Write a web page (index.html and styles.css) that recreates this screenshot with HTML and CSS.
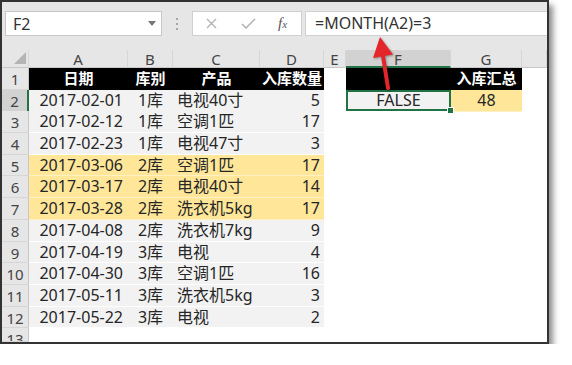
FILE: index.html
```html
<!DOCTYPE html>
<html lang="zh">

<head>
    <meta charset="UTF-8">
    <meta name="viewport" content="width=device-width, initial-scale=1.0">
    <title>入库汇总</title>
    <link rel="stylesheet" href="styles.css">
</head>

<body>
    <div class="frame">
        <div class="toolbar">
            <div class="namebox">
                <span>F2</span>
                <svg class="caret" width="8" height="5" viewBox="0 0 8 5"><polygon points="0,0 8,0 4,5" fill="#777"/></svg>
            </div>
            <div class="dots"><i></i><i></i><i></i></div>
            <div class="fxbox">
                <svg width="11" height="11" viewBox="0 0 11 11"><path d="M1 1 L10 10 M10 1 L1 10" stroke="#b4b4b4" stroke-width="1.4"/></svg>
                <svg width="15" height="11" viewBox="0 0 15 11"><path d="M1 6 L5 10 L14 1" stroke="#b4b4b4" stroke-width="1.6" fill="none"/></svg>
                <span class="fx">f<small>x</small></span>
            </div>
            <div class="formula">=MONTH(A2)=3</div>
        </div>

        <div class="sheet">
            <div class="row colhead">
                <div class="corner"><svg width="12" height="12" viewBox="0 0 12 12"><polygon points="0,12 12,12 12,0" fill="#b4b4b4"/></svg></div>
                <div>A</div><div>B</div><div>C</div><div>D</div><div>E</div><div class="sel">F</div><div>G</div><div></div>
            </div>
            <div class="row">
                <div class="rn">1</div>
                <div class="hd">日期</div><div class="hd">库别</div><div class="hd">产品</div><div class="hd">入库数量</div>
                <div></div><div class="hd"></div><div class="hd">入库汇总</div><div></div>
            </div>
            <div class="row">
                <div class="rn cur">2</div>
                <div class="g date">2017-02-01</div><div class="g ctr">1库</div><div class="g left">电视40寸</div><div class="g num">5</div>
                <div></div><div class="g ctr active">FALSE</div><div class="y ctr">48</div><div></div>
            </div>
            <div class="row">
                <div class="rn">3</div>
                <div class="g date">2017-02-12</div><div class="g ctr">1库</div><div class="g left">空调1匹</div><div class="g num">17</div>
            </div>
            <div class="row">
                <div class="rn">4</div>
                <div class="g date">2017-02-23</div><div class="g ctr">1库</div><div class="g left">电视47寸</div><div class="g num">3</div>
            </div>
            <div class="row">
                <div class="rn">5</div>
                <div class="y date">2017-03-06</div><div class="y ctr">2库</div><div class="y left">空调1匹</div><div class="y num">17</div>
            </div>
            <div class="row">
                <div class="rn">6</div>
                <div class="y date">2017-03-17</div><div class="y ctr">2库</div><div class="y left">电视40寸</div><div class="y num">14</div>
            </div>
            <div class="row">
                <div class="rn">7</div>
                <div class="y date">2017-03-28</div><div class="y ctr">2库</div><div class="y left">洗衣机5kg</div><div class="y num">17</div>
            </div>
            <div class="row">
                <div class="rn">8</div>
                <div class="g date">2017-04-08</div><div class="g ctr">2库</div><div class="g left">洗衣机7kg</div><div class="g num">9</div>
            </div>
            <div class="row">
                <div class="rn">9</div>
                <div class="g date">2017-04-19</div><div class="g ctr">3库</div><div class="g left">电视</div><div class="g num">4</div>
            </div>
            <div class="row">
                <div class="rn">10</div>
                <div class="g date">2017-04-30</div><div class="g ctr">3库</div><div class="g left">空调1匹</div><div class="g num">16</div>
            </div>
            <div class="row">
                <div class="rn">11</div>
                <div class="g date">2017-05-11</div><div class="g ctr">3库</div><div class="g left">洗衣机5kg</div><div class="g num">3</div>
            </div>
            <div class="row">
                <div class="rn">12</div>
                <div class="g date">2017-05-22</div><div class="g ctr">3库</div><div class="g left">电视</div><div class="g num">2</div>
            </div>
            <div class="row last">
                <div class="rn">13</div>
            </div>
        </div>

        <!-- red arrow pointing at the formula -->
        <svg class="arrow" width="30" height="60" viewBox="0 0 30 60">
            <line x1="14.5" y1="18" x2="20" y2="53" stroke="#e4262a" stroke-width="4" stroke-linecap="round"/>
            <polygon points="12,2 5,23 25,19.5" fill="#e4262a"/>
        </svg>
    </div>
</body>

</html>
```

FILE: styles.css
```css
body {
    margin: 0;
    padding: 0;
    background-color: #fff;
    font-family: "Noto Sans", "Noto Sans CJK SC", sans-serif;
    color: #262626;
}

.frame {
    position: relative;
    width: 549px;
    height: 344px;
    box-sizing: border-box;
    border: 2px solid #333;
    background-color: #fff;
    box-shadow: 4px 5px 6px rgba(0, 0, 0, 0.45);
    overflow: hidden;
}

/* formula bar */
.toolbar {
    height: 48px;
    background-color: #e6e6e6;
    display: flex;
    align-items: flex-start;
    padding-top: 9px;
    box-sizing: border-box;
}

.namebox {
    margin-left: 3px;
    width: 157px;
    height: 25px;
    box-sizing: border-box;
    background-color: #fff;
    border: 1px solid #c6c6c6;
    display: flex;
    align-items: center;
    justify-content: space-between;
    padding: 0 5px 0 7px;
    font-size: 16px;
    color: #333;
}

.dots {
    width: 30px;
    height: 25px;
    display: flex;
    flex-direction: column;
    align-items: center;
    justify-content: center;
    gap: 3px;
}

.dots i {
    width: 2px;
    height: 2px;
    background-color: #a8a8a8;
}

.fxbox {
    width: 110px;
    height: 25px;
    box-sizing: border-box;
    background-color: #fff;
    border: 1px solid #d0d0d0;
    display: flex;
    align-items: center;
    padding-left: 13px;
    gap: 0;
}

.fxbox svg:nth-child(2) {
    margin-left: 24px;
}

.fx {
    margin-left: 22px;
    font-family: "Liberation Serif", serif;
    font-style: italic;
    font-size: 15px;
    color: #555;
}

.fx small {
    font-size: 11px;
}

.formula {
    margin-left: 3px;
    flex: 1;
    height: 25px;
    box-sizing: border-box;
    background-color: #fff;
    border: 1px solid #d0d0d0;
    border-right: none;
    padding-left: 9px;
    font-size: 16px;
    line-height: 23px;
    color: #333;
}

/* sheet grid */
.row {
    display: grid;
    grid-template-columns: 27px 99px 45px 87px 64px 22px 105px 71px 1fr;
    height: 21.7px;
    font-size: 16px;
    line-height: 21px;
}

.row > div {
    box-sizing: border-box;
    white-space: nowrap;
    overflow: hidden;
}

.row.last {
    height: 14px;
}

.colhead {
    height: 18px;
    background-color: #e6e6e6;
    font-size: 15px;
    line-height: 18px;
    color: #444;
    text-align: center;
}

.colhead > div {
    border-right: 1px solid #d6d6d6;
    border-bottom: 1px solid #c8c8c8;
}

.colhead .corner {
    display: flex;
    align-items: flex-end;
    justify-content: flex-end;
    padding: 0 2px 3px 0;
}

.colhead .sel {
    background-color: #d2d2d2;
    border-bottom: 2px solid #217346;
}

.rn {
    background-color: #e6e6e6;
    border-right: 1px solid #c8c8c8;
    border-bottom: 1px solid #d6d6d6;
    text-align: center;
    font-size: 15px;
    color: #444;
    line-height: 22px;
}

.rn.cur {
    background-color: #d2d2d2;
    border-right: 2px solid #217346;
}

.hd {
    background-color: #000;
    color: #fff;
    font-weight: bold;
    font-size: 15px;
    text-align: center;
}

.g {
    background-color: #f2f2f2;
    border-bottom: 1px solid #fff;
}

.y {
    background-color: #ffe699;
    border-bottom: 1px solid #fff1c4;
}

.date {
    text-align: right;
    padding-right: 5px;
}

.ctr {
    text-align: center;
}

.left {
    padding-left: 4px;
}

.num {
    text-align: right;
    padding-right: 4px;
}

.active {
    position: relative;
    overflow: visible !important;
    box-shadow: inset 0 0 0 2px #217346;
}

.active::after {
    content: "";
    position: absolute;
    right: -3px;
    bottom: -3px;
    width: 5px;
    height: 5px;
    background-color: #217346;
    border: 1px solid #fff;
}

.arrow {
    position: absolute;
    left: 366px;
    top: 33px;
    filter: drop-shadow(1px 1px 1px rgba(0, 0, 0, 0.35));
}
```
